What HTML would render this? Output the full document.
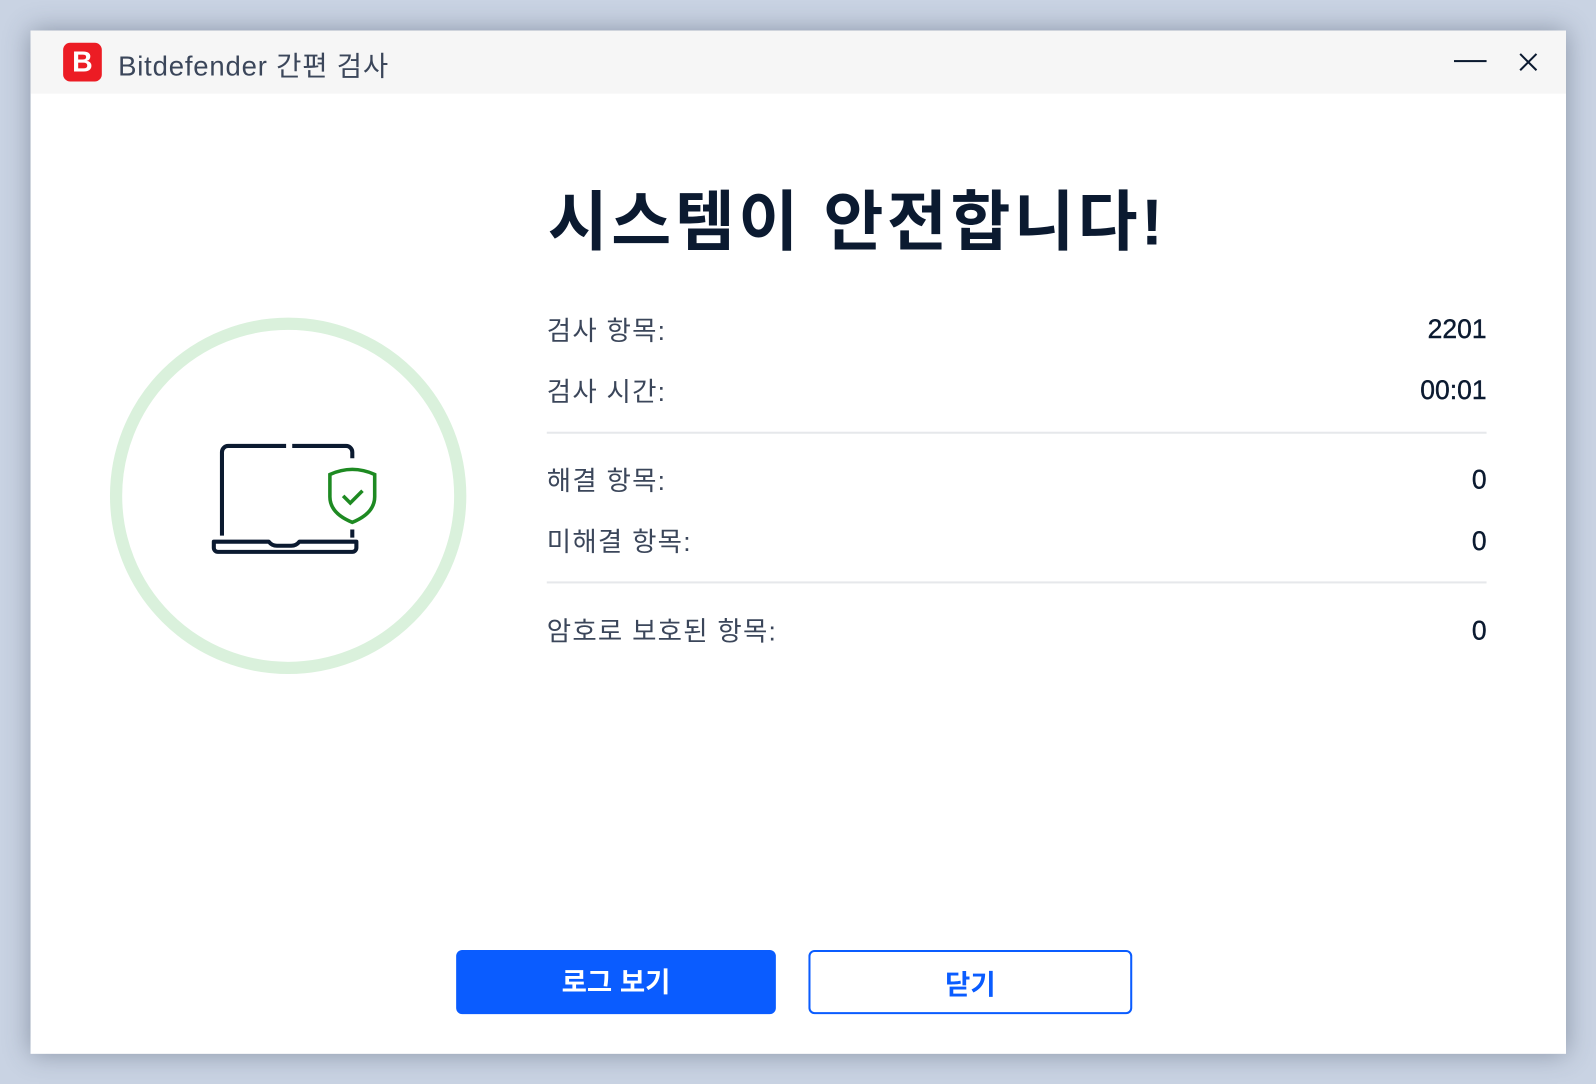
<!DOCTYPE html>
<html><head><meta charset="utf-8"><style>
*{margin:0;padding:0;box-sizing:border-box}
body{width:1596px;height:1084px;background:#c9d3e3;position:relative;overflow:hidden;font-family:"Liberation Sans","Noto Sans CJK KR",sans-serif}
.win{position:absolute;left:30px;top:30px;width:1508px;height:1005px;background:#fff;box-shadow:0 0 24px rgba(60,70,90,.45);transform:scale(1.0182);transform-origin:-30px -30px}
.tb{position:absolute;left:0;top:0;width:100%;height:62px;background:#f6f6f6}
.logo{position:absolute;left:32px;top:12px;width:38px;height:38px;background:#ec1c24;border-radius:7px;color:#fff;font-weight:bold;font-size:28px;text-align:center;line-height:38px}
.tt{position:absolute;left:86px;top:13px;font-size:27px;color:#3b465a;letter-spacing:0.8px}
.abs{position:absolute}
.h1{left:508px;top:137px;font-size:64px;font-weight:bold;color:#0b1a30;white-space:nowrap;letter-spacing:3.5px}
.lb{left:507px;font-size:26px;color:#3b465a;white-space:nowrap;letter-spacing:1.2px}
.vl{right:78px;font-size:26px;color:#0b1a30;-webkit-text-stroke:0.4px #0b1a30}
.hr{left:507px;width:923px;height:2px;background:#e6e8eb}
.btn{position:absolute;top:903px;height:63px;border-radius:6px;font-size:27px;font-weight:bold;text-align:center;line-height:64px}
</style></head><body>
<div class="win">
 <div class="tb">
  <div class="logo">B</div>
  <div class="tt">Bitdefender 간편 검사</div>
  <div class="abs" style="left:1398px;top:29px;width:32px;height:2px;background:#0b1a30"></div>
  <svg class="abs" style="left:1460px;top:20px" width="22" height="22" viewBox="0 0 22 22"><path d="M3 3L19 19M19 3L3 19" stroke="#0b1a30" stroke-width="2"/></svg>
 </div>
 <svg class="abs" style="left:70px;top:275px" width="366" height="366"><circle cx="183" cy="182" r="169" fill="none" stroke="#daf1dc" stroke-width="12"/></svg>
 <svg class="abs" style="left:166px;top:390px" width="180" height="140" viewBox="0 0 180 140">
  <path d="M85 18H28a6 6 0 0 0-6 6V106" fill="none" stroke="#0b1a30" stroke-width="4"/>
  <path d="M91 18H144a6 6 0 0 1 6 6V30" fill="none" stroke="#0b1a30" stroke-width="4"/>
  <path d="M150 100V108" fill="none" stroke="#0b1a30" stroke-width="4"/>
  <path d="M14 112H68q3 4 8 4h14q5 0 8-4H154v6a4 4 0 0 1-4 4H18a4 4 0 0 1-4-4z" fill="none" stroke="#0b1a30" stroke-width="4" stroke-linejoin="round"/>
  <path d="M128 46q11-5 22-5q11 0 22 5v22q0 16-22 25q-22-9-22-25z" fill="none" stroke="#1e8a22" stroke-width="3.5"/>
  <path d="M141 67l7 7l12-12" fill="none" stroke="#1e8a22" stroke-width="3.5"/>
 </svg>
 <div class="abs h1">시스템이 안전합니다!</div>
 <div class="abs lb" style="top:275px">검사 항목:</div><div class="abs vl" style="top:278px">2201</div>
 <div class="abs lb" style="top:335px">검사 시간:</div><div class="abs vl" style="top:338px">00:01</div>
 <div class="abs hr" style="top:394px"></div>
 <div class="abs lb" style="top:422px">해결 항목:</div><div class="abs vl" style="top:426px">0</div>
 <div class="abs lb" style="top:482px">미해결 항목:</div><div class="abs vl" style="top:486px">0</div>
 <div class="abs hr" style="top:541px"></div>
 <div class="abs lb" style="top:570px">암호로 보호된 항목:</div><div class="abs vl" style="top:574px">0</div>
 <div class="btn" style="left:418px;width:314px;background:#0a5cff;color:#fff">로그 보기</div>
 <div class="btn" style="left:764px;width:318px;border:2px solid #0a5cff;color:#0a5cff">닫기</div>
</div>
</body></html>
